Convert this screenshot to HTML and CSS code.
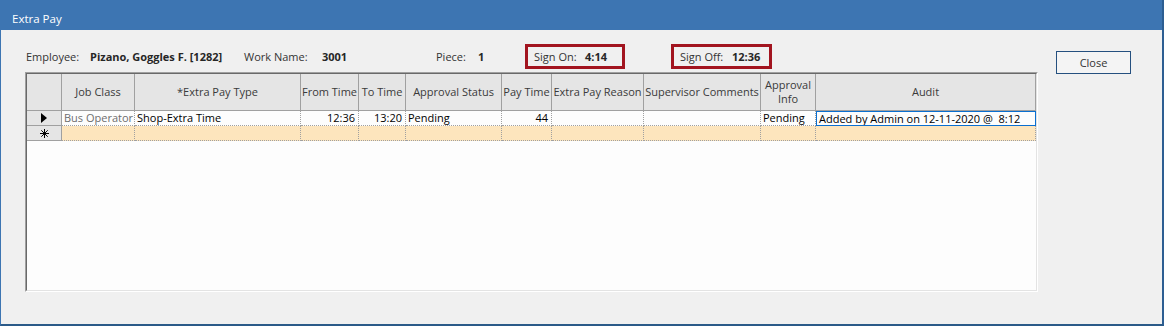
FILE: index.html
```html
<!DOCTYPE html>
<html lang="en">
<head>
    <meta charset="UTF-8">
    <meta name="viewport" content="width=device-width, initial-scale=1.0">
    <title>Extra Pay</title>
    <link rel="stylesheet" href="styles.css">
</head>
<body>
    <div class="window">
        <div class="titlebar">Extra Pay</div>
        <div class="content">
            <div class="main">
                <div class="info-row">
                    <span class="lbl w-emp">Employee:</span>
                    <span class="val w-name">Pizano, Goggles F. [1282]</span>
                    <span class="lbl w-work">Work Name:</span>
                    <span class="val w-3001">3001</span>
                    <span class="lbl w-piece">Piece:</span>
                    <span class="val w-one">1</span>
                    <div class="sign-box">
                        <span class="lbl w-on">Sign On:</span>
                        <span class="val">4:14</span>
                    </div>
                    <div class="sign-box sign-off">
                        <span class="lbl w-off">Sign Off:</span>
                        <span class="val">12:36</span>
                    </div>
                </div>

                <div class="grid-outer">
                    <div class="grid-inner">
                        <div class="grid-row head">
                            <div class="cell sel"></div>
                            <div class="cell">Job Class</div>
                            <div class="cell">*Extra Pay Type</div>
                            <div class="cell">From Time</div>
                            <div class="cell">To Time</div>
                            <div class="cell">Approval Status</div>
                            <div class="cell">Pay Time</div>
                            <div class="cell">Extra Pay Reason</div>
                            <div class="cell">Supervisor Comments</div>
                            <div class="cell">Approval<br>Info</div>
                            <div class="cell">Audit</div>
                        </div>
                        <div class="grid-row data">
                            <div class="cell sel">
                                <svg width="6" height="10" viewBox="0 0 6 10"><path d="M0 0 L6 5 L0 10 Z" fill="#000"/></svg>
                            </div>
                            <div class="cell muted">Bus Operator</div>
                            <div class="cell">Shop-Extra Time</div>
                            <div class="cell num">12:36</div>
                            <div class="cell num">13:20</div>
                            <div class="cell">Pending</div>
                            <div class="cell num">44</div>
                            <div class="cell"></div>
                            <div class="cell"></div>
                            <div class="cell">Pending</div>
                            <div class="cell focused">Added by Admin on 12-11-2020 @&nbsp; 8:12</div>
                        </div>
                        <div class="grid-row data new-row">
                            <div class="cell sel">
                                <svg width="9" height="9" viewBox="0 0 9 9">
                                    <path d="M4.5 0 V9 M0 4.5 H9 M1.3 1.3 L7.7 7.7 M7.7 1.3 L1.3 7.7" stroke="#000" stroke-width="1" fill="none"/>
                                </svg>
                            </div>
                            <div class="cell"></div>
                            <div class="cell"></div>
                            <div class="cell"></div>
                            <div class="cell"></div>
                            <div class="cell"></div>
                            <div class="cell"></div>
                            <div class="cell"></div>
                            <div class="cell"></div>
                            <div class="cell"></div>
                            <div class="cell"></div>
                        </div>
                    </div>
                </div>
            </div>

            <div class="side">
                <button class="close-btn">Close</button>
            </div>
        </div>
    </div>
</body>
</html>
```

FILE: styles.css
```css
body {
    margin: 0;
    font-family: "Open Sans", "Noto Sans", sans-serif;
    font-size: 11px;
    color: #1e1e1e;
    background-color: #f0f0f0;
}
.window {
    width: 1164px;
    height: 326px;
    display: flex;
    flex-direction: column;
    box-sizing: border-box;
}
.titlebar {
    height: 30px;
    box-sizing: border-box;
    padding: 11px 0 0 12px;
    line-height: 16px;
    font-size: 11.5px;
    color: #ffffff;
    background-color: #3d75b2;
    border-right: 2px solid #2d5e92;
}
.content {
    flex: 1;
    display: flex;
    box-sizing: border-box;
    padding: 14px 0 0 24px;
    border-left: 1px solid #3d75b2;
    border-right: 2px solid #2d5e92;
    border-bottom: 2px solid #2b5a88;
}
.main {
    display: flex;
    flex-direction: column;
}
.info-row {
    display: flex;
    align-items: center;
    height: 25px;
    margin: 0 0 3px 1px;
    color: #333333;
}
.lbl {
    display: inline-block;
}
.val {
    display: inline-block;
    font-weight: 700;
    color: #262626;
}
.w-emp { width: 64px; }
.w-name { width: 154px; }
.w-work { width: 78px; }
.w-3001 { width: 114px; }
.w-piece { width: 42px; }
.w-one { width: 47px; }
.w-on { width: 51px; }
.w-off { width: 52px; }
.sign-box {
    width: 100px;
    height: 25px;
    box-sizing: border-box;
    border: 3px solid #a2141f;
    padding-left: 6px;
    display: flex;
    align-items: center;
}
.sign-off {
    width: 101px;
    margin-left: 46px;
}
.grid-outer {
    width: 1013px;
    height: 220px;
    box-sizing: border-box;
    border: 1px solid;
    border-color: #a0a0a0 #ffffff #ffffff #a0a0a0;
}
.grid-inner {
    height: 100%;
    box-sizing: border-box;
    border: 1px solid;
    border-color: #696969 #e3e3e3 #e3e3e3 #696969;
    background-color: #fdfdfd;
}
.grid-row {
    display: grid;
    grid-template-columns: 35px 73px 166px 58px 47px 96px 50px 92px 117px 55px 220px;
}
.cell {
    box-sizing: border-box;
    overflow: hidden;
    white-space: nowrap;
}
.head .cell {
    height: 37px;
    display: flex;
    align-items: center;
    justify-content: center;
    text-align: center;
    line-height: 14px;
    color: #3a3a3a;
    background-color: #e5e5e5;
    border-right: 1px solid #a0a0a0;
    border-bottom: 1px solid #a0a0a0;
}
.data .cell {
    height: 15px;
    line-height: 14px;
    padding: 0 3px 0 2px;
    color: #000000;
    border-right: 1px dotted #a0a0a0;
    border-bottom: 1px dotted #a0a0a0;
}
.data .cell.sel {
    padding: 0;
    display: flex;
    align-items: center;
    justify-content: center;
    background-color: #e5e5e5;
    border-right: 1px solid #a0a0a0;
    border-bottom: 1px solid #a0a0a0;
}
.data .cell.muted {
    color: #6d6d6d;
}
.data .cell.num {
    text-align: right;
}
.data .cell.focused {
    border: 1px solid #0a6fd0;
    padding-left: 2px;
    line-height: 13px;
}
.new-row .cell {
    background-color: #fde5bd;
}
.side {
    margin-left: 18px;
    padding-top: 7px;
}
.close-btn {
    width: 75px;
    height: 23px;
    font-family: inherit;
    font-size: 11px;
    color: #333333;
    background-color: #f4f4f4;
    border: 1px solid #25507f;
    padding: 0;
}
```
